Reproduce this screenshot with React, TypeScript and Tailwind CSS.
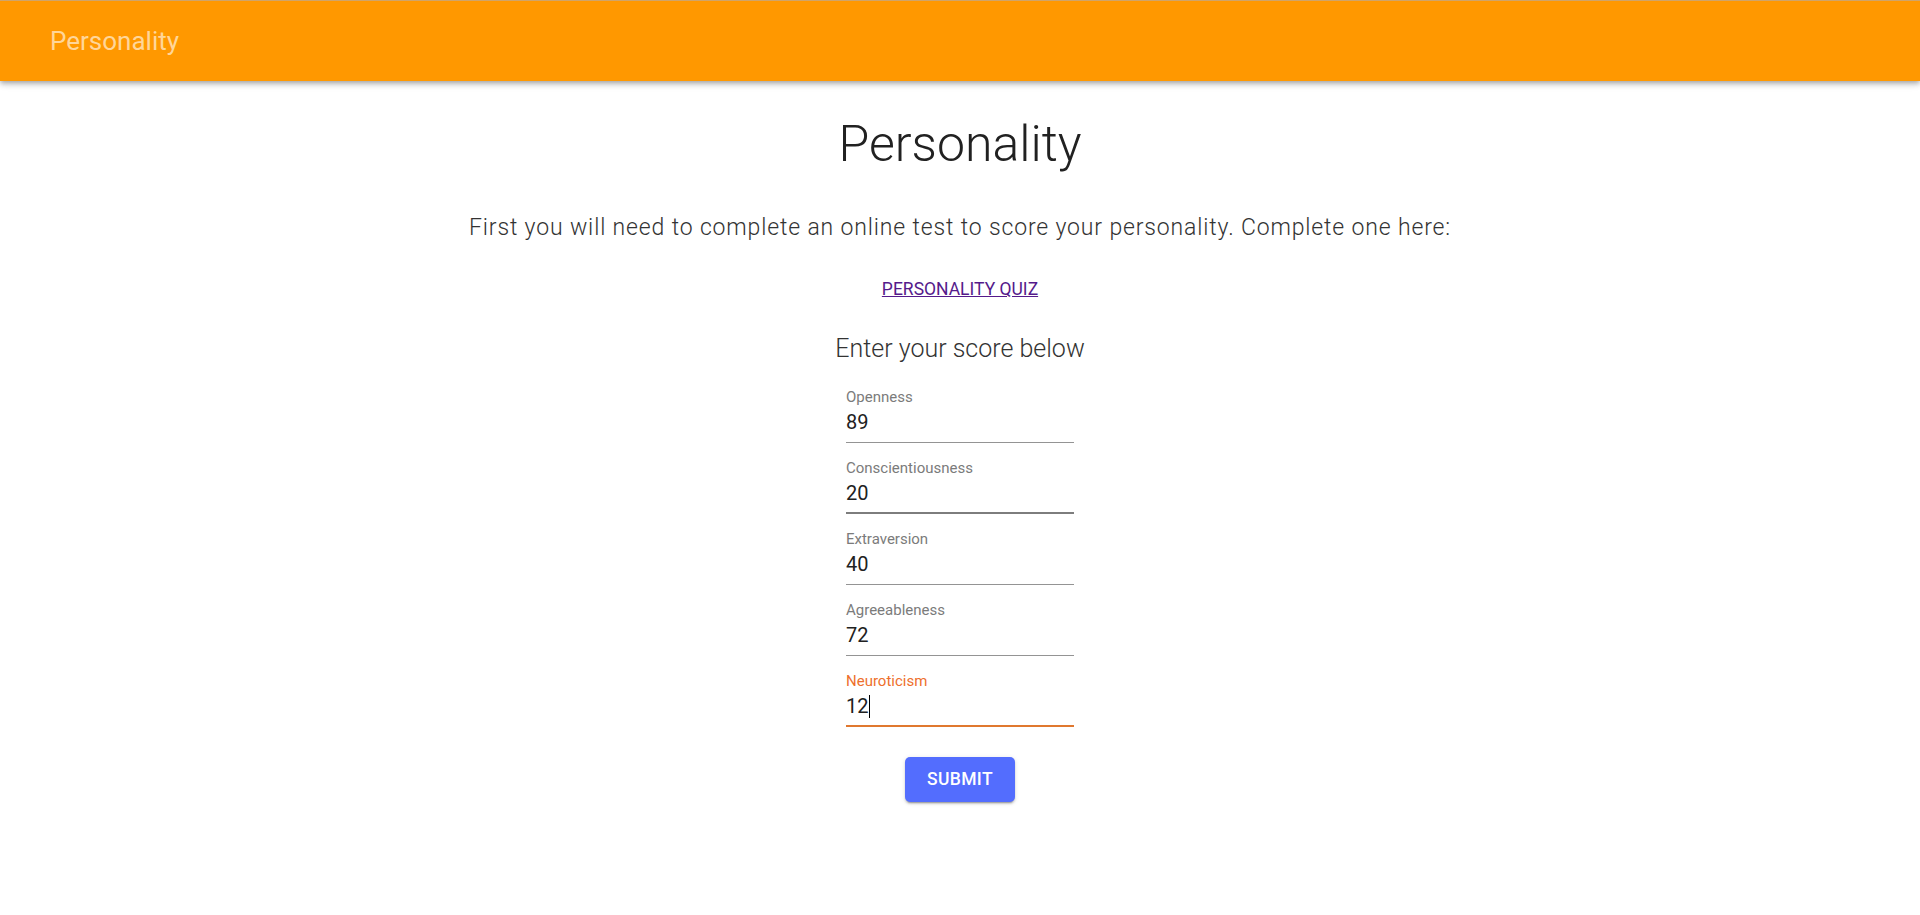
import React from 'react';

const fields = [
  { label: 'Openness', value: '89', state: 'idle' },
  { label: 'Conscientiousness', value: '20', state: 'hover' },
  { label: 'Extraversion', value: '40', state: 'idle' },
  { label: 'Agreeableness', value: '72', state: 'idle' },
  { label: 'Neuroticism', value: '12', state: 'focus' },
];

const ScoreField = ({ label, value, state }: { label: string; value: string; state: string }) => {
  const labelColor = state === 'focus' ? 'text-[#ee6f2d]' : 'text-[#7b7b7b]';
  return (
    <div className="flex flex-col w-[228px] mb-[15px]">
      <label className={`text-[15px] leading-[20px] ${labelColor}`}>{label}</label>
      <div className="mt-[2px] text-[20px] leading-[26px] text-[#212121] pb-[7px] flex items-center">
        {value}
        {state === 'focus' && <span className="inline-block w-px h-[23px] bg-black ml-px" />}
      </div>
      {state === 'idle' && <div className="h-px bg-[#949494]" />}
      {state === 'hover' && <div className="h-[2px] -mt-px bg-[#7d7d7d]" />}
      {state === 'focus' && <div className="h-[2px] -mt-px bg-[#e0782f]" />}
    </div>
  );
};

const App = () => {
  return (
    <div className="min-h-screen bg-white font-['Roboto',sans-serif]">
      <header className="h-[81px] bg-[#ff9800] border-t border-[#cfa46a] flex items-center px-[50px] shadow-[0_2px_4px_-1px_rgba(0,0,0,0.2),0_4px_5px_0_rgba(0,0,0,0.14),0_1px_10px_0_rgba(0,0,0,0.12)]">
        <h6 className="text-[26px] font-normal text-[#ffd699] leading-none">Personality</h6>
      </header>
      <main className="flex flex-col items-center">
        <h1 className="mt-[33px] text-[50px] leading-[60px] font-light text-[#212121]">Personality</h1>
        <p className="mt-[39px] text-[23px] leading-[30px] font-light tracking-[0.85px] text-[#333]">
          First you will need to complete an online test to score your personality. Complete one here:
        </p>
        <a href="#" className="mt-[34px] text-[17.5px] leading-[24px] uppercase underline text-[#551a8b]">
          Personality Quiz
        </a>
        <h2 className="mt-[32px] text-[25px] leading-[32px] font-light text-[#333]">Enter your score below</h2>
        <form className="mt-[22px] flex flex-col items-center">
          {fields.map((f) => (
            <ScoreField key={f.label} {...f} />
          ))}
          <button
            type="button"
            className="mt-[15px] w-[110px] h-[45px] rounded-[5px] bg-[#536dfe] text-white text-[17.5px] font-medium uppercase tracking-[0.02em] shadow-[0_3px_1px_-2px_rgba(0,0,0,0.2),0_2px_2px_0_rgba(0,0,0,0.14),0_1px_5px_0_rgba(0,0,0,0.12)]"
          >
            Submit
          </button>
        </form>
      </main>
    </div>
  );
};

export default App;
